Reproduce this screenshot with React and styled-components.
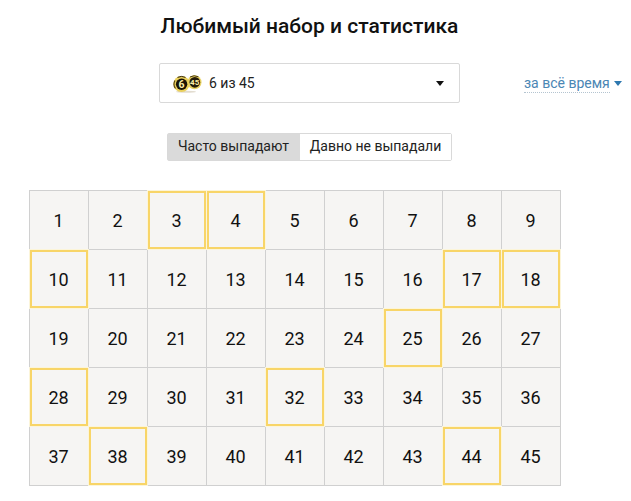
import React, { useState } from "react";
import styled, { createGlobalStyle } from "styled-components";

const GlobalStyle = createGlobalStyle`
  * {
    box-sizing: border-box;
  }

  body {
    margin: 0;
    background: #fff;
    color: #111;
    font-family: Roboto, "Liberation Sans", sans-serif;
    overflow: hidden;
  }
`;

const Page = styled.main`
  display: flex;
  flex-direction: column;
  width: 631px;
  height: 501px;
  padding-top: 12px;
`;

const Title = styled.h1`
  width: 619px;
  margin: 0;
  font-size: 21px;
  font-weight: 500;
  line-height: 28px;
  text-align: center;
  white-space: nowrap;
`;

const Filters = styled.div`
  display: flex;
  align-items: center;
  margin: 23px 0 0 159px;
`;

const Select = styled.button`
  display: flex;
  align-items: center;
  width: 301px;
  height: 40px;
  padding: 0 15px 0 13px;
  border: 1px solid #d9d9d9;
  border-radius: 2px;
  background: #fff;
  color: #222;
  font-family: inherit;
  font-size: 14px;
`;

const Balls = styled.svg`
  margin-top: 2px;
`;

const SelectLabel = styled.span`
  flex: 1;
  margin-left: 7px;
  text-align: left;
`;

const Caret = styled.span`
  border: 4px solid transparent;
  border-top: 5px solid ${(props) => props.$color};
  border-bottom: 0;
`;

const Period = styled.a`
  display: flex;
  align-items: center;
  gap: 4px;
  margin-left: 64px;
  padding-top: 1px;
  color: #4a86b4;
  font-size: 14px;
  white-space: nowrap;
`;

const PeriodText = styled.span`
  border-bottom: 1px dotted #b4c4d0;
  line-height: 18px;
`;

const Tabs = styled.div`
  display: flex;
  width: 285px;
  height: 28px;
  margin: 30px 0 0 167px;
  border: 1px solid #d9d9d9;
  border-radius: 2px;
`;

const Tab = styled.button`
  width: ${(props) => props.$width}px;
  padding: 0 0 2px;
  border: 0;
  background: ${(props) => (props.$active ? "#dadada" : "#fff")};
  color: #222;
  font-family: inherit;
  font-size: 14px;
  white-space: nowrap;

  &:first-child {
    padding-right: 1px;
  }
`;

const Board = styled.div`
  display: grid;
  grid-template-columns: repeat(9, 58px);
  grid-auto-rows: 58px;
  gap: 1px;
  width: 532px;
  margin: 29px 0 0 29px;
  padding: 1px;
  background: #d0d0d0;
`;

const Cell = styled.div`
  display: flex;
  align-items: center;
  justify-content: center;
  padding-right: 1px;
  background: #f6f5f3;
  font-size: 18px;
`;

const FavoriteCell = styled(Cell)`
  position: relative;
  border: 2px solid #f8d568;
  box-shadow: 0 0 0 1px #fcf5d9;
`;

const favorites = [3, 4, 10, 17, 18, 25, 28, 32, 38, 44];
const numbers = Array.from({ length: 45 }, (_, i) => i + 1);

function LottoBalls() {
  return (
    <Balls width="29" height="20" viewBox="0 0 29 20">
      <ellipse cx="13" cy="17.8" rx="10" ry="1" fill="#e2dccf" />
      <circle cx="21.5" cy="8.3" r="7" fill="#e8d264" />
      <circle cx="21.8" cy="8.3" r="5.4" fill="#251b08" />
      <path d="M17 3 Q21 0.6 25.5 2.8" fill="none" stroke="#4a390d" strokeWidth="1" />
      <circle cx="8.5" cy="10" r="8" fill="#ead05c" />
      <path d="M2 6.5 A7.3 7.3 0 0 0 2.5 14.5" fill="none" stroke="#5a460f" strokeWidth="1.2" />
      <path d="M4.5 3.4 Q8.5 1.4 12.5 3.4" fill="none" stroke="#302408" strokeWidth="1" />
      <circle cx="8.6" cy="10.2" r="5.7" fill="#191205" />
      <g fill="#fbeea6" fontFamily="Roboto, sans-serif" fontWeight="700" textAnchor="middle">
        <text x="8.4" y="13.8" fontSize="10.5">6</text>
        <text x="21.7" y="11.1" fontSize="8">45</text>
      </g>
    </Balls>
  );
}

function App() {
  const [tab, setTab] = useState("often");

  return (
    <>
      <GlobalStyle />
      <Page>
        <Title>Любимый набор и статистика</Title>
        <Filters>
          <Select>
            <LottoBalls />
            <SelectLabel>6 из 45</SelectLabel>
            <Caret $color="#111" />
          </Select>
          <Period>
            <PeriodText>за всё время</PeriodText>
            <Caret $color="#2d78af" />
          </Period>
        </Filters>
        <Tabs>
          <Tab $width={132} $active={tab === "often"} onClick={() => setTab("often")}>
            Часто выпадают
          </Tab>
          <Tab $width={151} $active={tab === "rare"} onClick={() => setTab("rare")}>
            Давно не выпадали
          </Tab>
        </Tabs>
        <Board>
          {numbers.map((n) =>
            favorites.includes(n) ? (
              <FavoriteCell key={n}>{n}</FavoriteCell>
            ) : (
              <Cell key={n}>{n}</Cell>
            )
          )}
        </Board>
      </Page>
    </>
  );
}

export default App;
